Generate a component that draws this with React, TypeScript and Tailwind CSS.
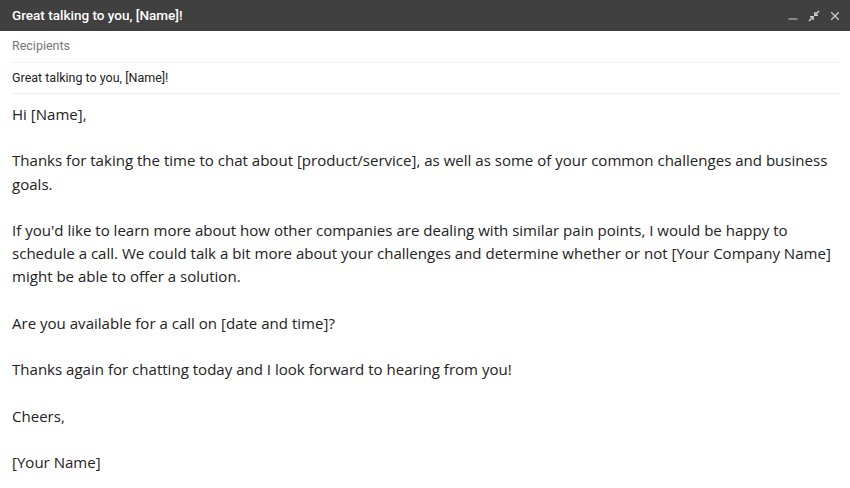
import { X, Minus } from 'lucide-react'

const PARAS: string[][] = [
  ['Hi [Name],'],
  [
    'Thanks for taking the time to chat about [product/service], as well as some of your common challenges and business',
    'goals.',
  ],
  [
    "If you'd like to learn more about how other companies are dealing with similar pain points, I would be happy to",
    'schedule a call. We could talk a bit more about your challenges and determine whether or not [Your Company Name]',
    'might be able to offer a solution.',
  ],
  ['Are you available for a call on [date and time]?'],
  ['Thanks again for chatting today and I look forward to hearing from you!'],
  ['Cheers,'],
  ['[Your Name]'],
]

function ShrinkIcon() {
  return (
    <svg width="12" height="12" viewBox="0 0 12 12" fill="none" stroke="currentColor" strokeWidth="1.4">
      <path d="M11 1 L7.2 4.8" />
      <path d="M6.8 2 L6.8 5.2 L10 5.2" />
      <path d="M1 11 L4.8 7.2" />
      <path d="M2 6.8 L5.2 6.8 L5.2 10" />
    </svg>
  )
}

export default function App() {
  return (
    <div className="w-[850px] h-[488px] bg-white overflow-hidden font-['Roboto',sans-serif]">
      {/* Barre de titre */}
      <div className="h-[31px] bg-[#404040] flex items-center justify-between pl-3 pr-2">
        <span className="text-white text-[13.5px] font-medium">Great talking to you, [Name]!</span>
        <div className="flex items-center gap-[8px] text-[#d0d0d0]">
          <Minus size={14} strokeWidth={2} className="mt-[6px]" />
          <ShrinkIcon />
          <X size={14} strokeWidth={2} />
        </div>
      </div>

      <div className="px-3 pr-[10px]">
        <div className="h-[32px] flex items-center border-b border-[#efefef] text-[12.5px] text-[#777]">
          Recipients
        </div>
        <div className="h-[31px] flex items-center border-b border-[#efefef] text-[12.5px] text-[#222]">
          Great talking to you, [Name]!
        </div>
      </div>

      {/* Corps du message */}
      <div className="px-3 pt-[9px] font-['Open_Sans',sans-serif] text-[15.05px] leading-[23.2px] text-[#222] flex flex-col gap-[23.2px]">
        {PARAS.map((p, i) => (
          <p key={i} className="whitespace-nowrap">
            {p.map((line, j) => (
              <span key={j} className="block">{line}</span>
            ))}
          </p>
        ))}
      </div>
    </div>
  )
}
